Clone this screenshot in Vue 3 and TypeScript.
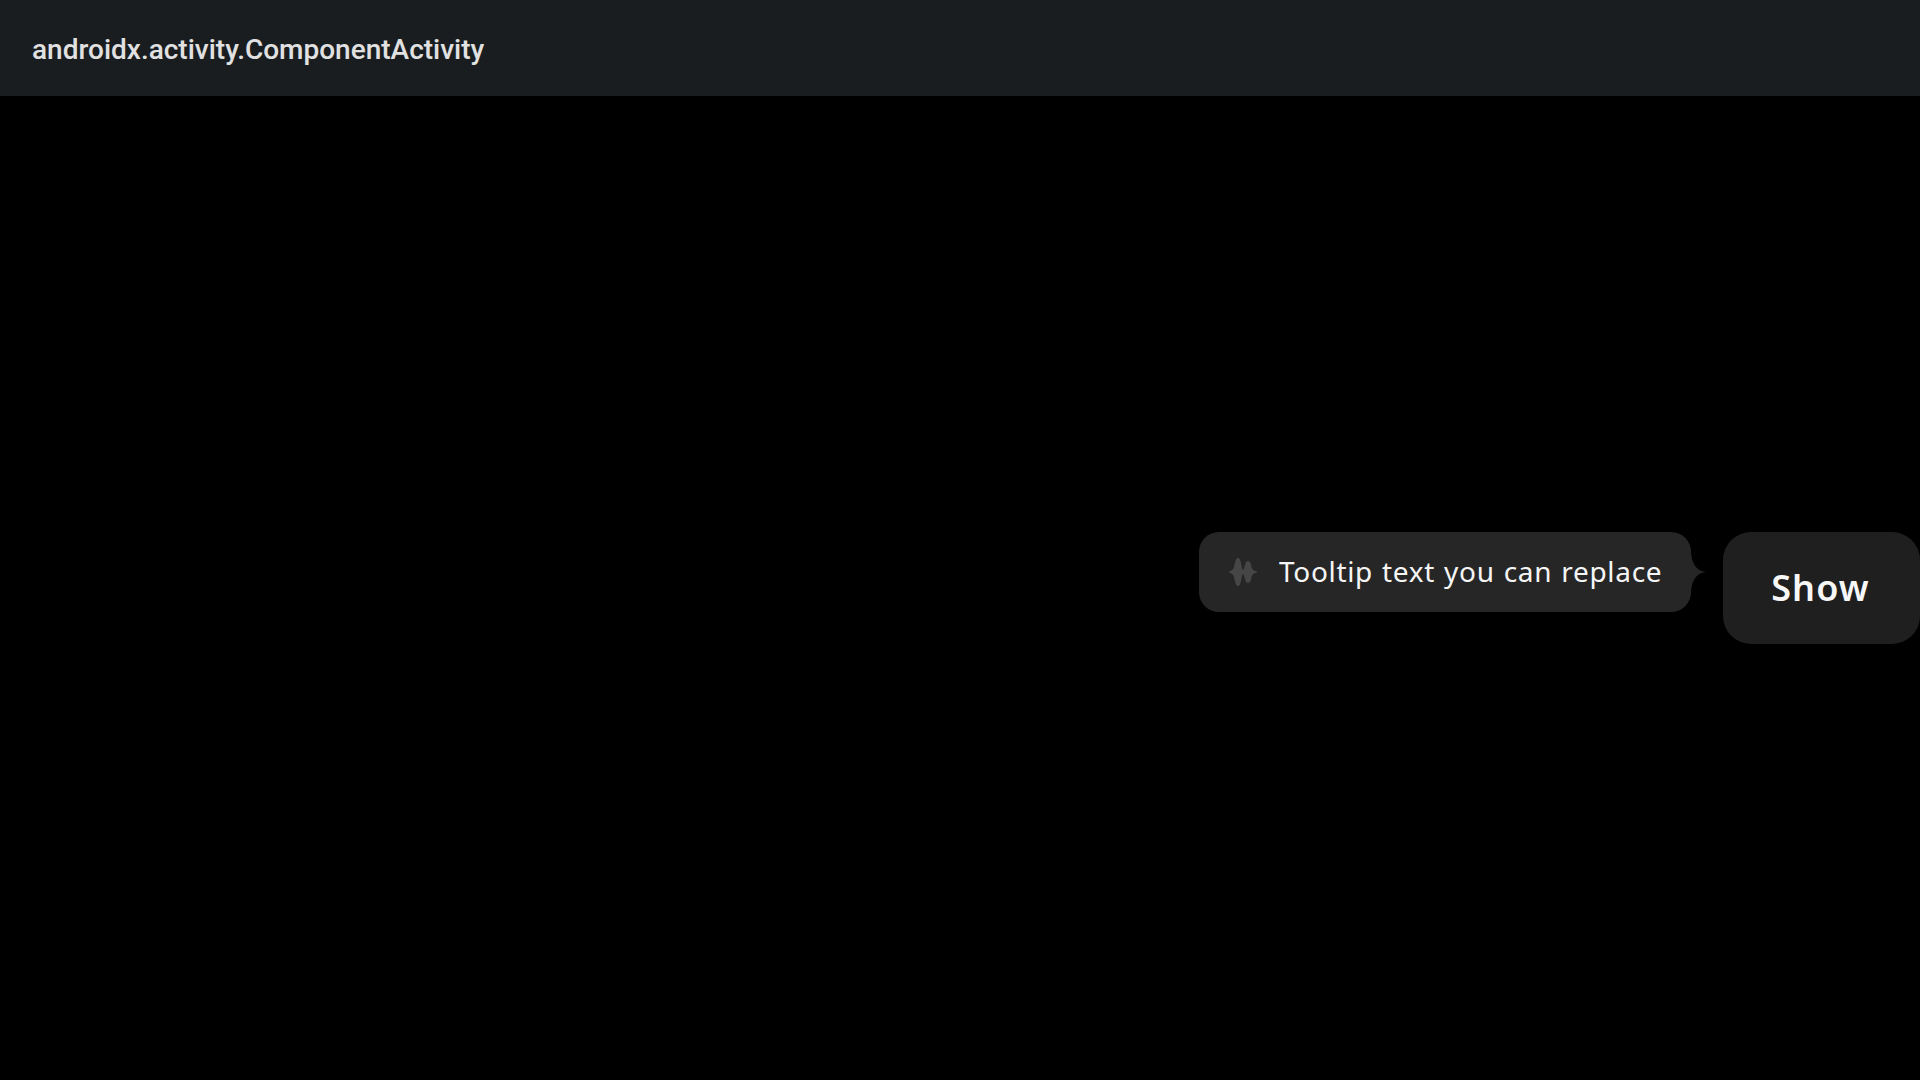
<script setup lang="ts">
import { ref } from 'vue'

const title = 'androidx.activity.ComponentActivity'
const tooltipText = 'Tooltip text you can replace'
const visible = ref<boolean>(true)
</script>

<template>
  <div class="screen">
    <header class="app-bar">
      <h1 class="title">{{ title }}</h1>
    </header>
    <main class="content">
      <div v-if="visible" class="tooltip" role="tooltip">
        <div class="bubble">
          <svg class="wave" viewBox="0 0 28 28" aria-hidden="true">
            <path
              d="M0.6 13.2C3.4 12.6 4.6 11 5.4 7.5C6.4 2.3 7.2 0 9 0C10.8 0 11.6 2.5 12.5 7.5C13 10.6 13.5 12 14 12C14.6 12 15.1 10.4 15.7 7.8C16.5 4.6 17.3 3 19 3C20.7 3 21.5 4.8 22.3 8C23.1 11.4 24.4 12.8 27.4 13.3Q28.6 14 27.4 14.7C24.4 15.2 23.1 16.6 22.3 20C21.5 23.2 20.7 25 19 25C17.3 25 16.5 23.4 15.7 20.2C15.1 17.6 14.6 16 14 16C13.5 16 13 17.4 12.5 20.5C11.6 25.7 10.8 28 9 28C7.2 28 6.4 25.7 5.4 20.5C4.6 17 3.4 15.4 0.6 14.8Q-0.6 14 0.6 13.2Z"
            />
          </svg>
          <span class="message">{{ tooltipText }}</span>
        </div>
        <svg class="tail" viewBox="0 0 16 56" aria-hidden="true">
          <path d="M0 6H1C1 17 5 27 16 28C5 29 1 39 1 50H0Z" />
        </svg>
      </div>
      <button class="show" type="button" @click="visible = true">Show</button>
    </main>
  </div>
</template>

<style>
body {
  margin: 0;
  background: #000;
}
</style>

<style scoped>
.screen {
  display: flex;
  flex-direction: column;
  height: 100vh;
  overflow: hidden;
  background: #000;
}

.app-bar {
  display: flex;
  align-items: center;
  flex: 0 0 96px;
  padding: 4px 32px 0;
  box-sizing: border-box;
  background: #1a1d1f;
}

.title {
  margin: 0;
  font: 500 28px/40px Roboto, sans-serif;
  color: #e1e1e1;
  white-space: nowrap;
}

.content {
  display: grid;
  flex: 1;
  grid-template-columns: auto 197px;
  justify-content: end;
  align-content: center;
  align-items: start;
  column-gap: 16px;
}

.tooltip {
  display: flex;
  align-items: center;
}

.bubble {
  display: flex;
  align-items: center;
  width: 492px;
  height: 80px;
  padding-left: 30px;
  box-sizing: border-box;
  border-radius: 20px;
  background: #262626;
}

.wave {
  flex: none;
  width: 28px;
  height: 28px;
  fill: #464646;
}

.message {
  margin-left: 22px;
  padding-bottom: 2px;
  font: 400 28px/36px 'Noto Sans', sans-serif;
  letter-spacing: 0.68px;
  word-spacing: 1.1px;
  color: #f5f5f5;
  white-space: nowrap;
}

.tail {
  flex: none;
  width: 16px;
  height: 56px;
  margin-left: -1px;
  margin-right: 1px;
  fill: #262626;
}

.show {
  height: 112px;
  padding: 0 2px 0 0;
  border: 0;
  border-radius: 28px;
  background: #1f1f1f;
  color: #f7f7f7;
  font: 600 36px/44px 'Noto Sans', sans-serif;
  letter-spacing: 1.1px;
}
</style>
